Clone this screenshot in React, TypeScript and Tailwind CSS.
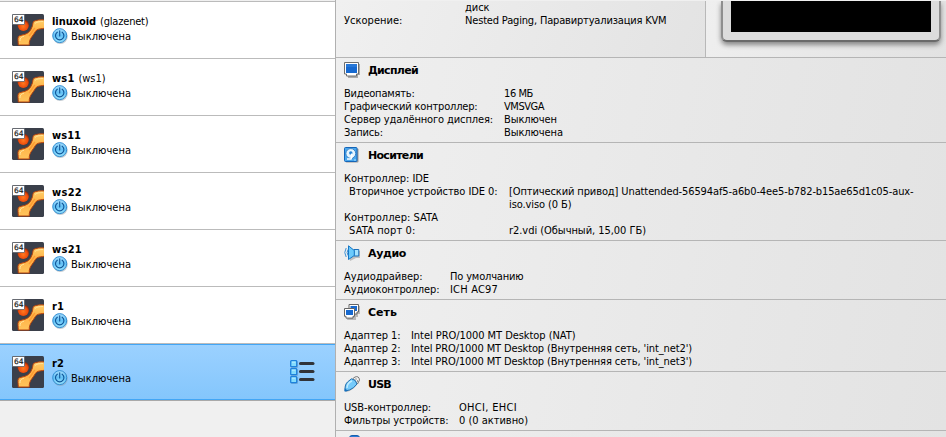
import { useLayoutEffect, useRef, useState, type ReactNode } from "react";

/** Text run whose tracking is adjusted so that it spans the given width. */
function Run({ children, w, bold }: { children: string; w: number; bold?: boolean }) {
  const ref = useRef<HTMLSpanElement>(null);
  const [tracking, setTracking] = useState(0);
  useLayoutEffect(() => {
    const el = ref.current;
    if (el) setTracking((w - el.getBoundingClientRect().width) / children.length);
  }, [w, children]);
  return (
    <span
      ref={ref}
      className={bold ? "inline-block whitespace-pre font-bold" : "inline-block whitespace-pre"}
      style={{ letterSpacing: `${tracking}px` }}
    >
      {children}
    </span>
  );
}

function OsIcon() {
  return (
    <svg width="32" height="32" viewBox="0 0 32 32" className="shrink-0">
      <defs>
        <linearGradient id="osPipe" x1="0" y1="0" x2="0" y2="1">
          <stop offset="0" stopColor="#ffcf6a" />
          <stop offset="0.45" stopColor="#ffb145" />
          <stop offset="1" stopColor="#ffc45c" />
        </linearGradient>
        <radialGradient id="osBall" cx="0.5" cy="0.6" r="0.55">
          <stop offset="0" stopColor="#ff7a20" />
          <stop offset="0.7" stopColor="#ee4c0c" />
          <stop offset="1" stopColor="#8c2a0c" />
        </radialGradient>
        <clipPath id="osClip"><rect width="32" height="32" rx="1.5" /></clipPath>
      </defs>
      <g clipPath="url(#osClip)">
        <rect width="32" height="32" fill="#3a3f4a" />
        <circle cx="11.3" cy="11.3" r="5.700" fill="url(#osBall)" />
        <path
          d="M33 6C29 5.500 24 6 21.500 7.500C20.500 9.500 21 11 20 13C18.500 17 16.500 19 13 20.300C10 21.300 7.500 21.300 6.300 22.800C5.500 25 6.300 28 6.300 31H17.300C17 27.500 18 25 20 22.500C22 20 22.800 18 24.500 16.200C27 14.500 29 15 33 14.200Z"
          fill="url(#osPipe)" stroke="#b8420c" strokeWidth="1"
        />
        <path d="M31 7.500C27 7.500 24.500 8 23 9.500M12 22.200C9 23 8 24 8 27" fill="none" stroke="#ffe39a" strokeWidth="1" />
        <path d="M17 22C20 19.500 20.500 16 23 14" fill="none" stroke="#ff9a30" strokeWidth="1.5" />
      </g>
      <rect x="0.5" y="0.5" width="12" height="10" rx="0.5" fill="#fff" stroke="#50545c" strokeWidth="0.7" />
      <text x="2" y="8.3" fontSize="7.5" fontFamily="DejaVu Sans, sans-serif" fill="#222" stroke="#222" strokeWidth="0.2" textLength="9.500">64</text>
    </svg>
  );
}

function PowerIcon() {
  return (
    <svg width="16" height="16" viewBox="0 0 16 16" className="shrink-0">
      <defs>
        <linearGradient id="pw" x1="0" y1="0" x2="0" y2="1">
          <stop offset="0" stopColor="#a5dcfc" />
          <stop offset="0.5" stopColor="#62c0f5" />
          <stop offset="1" stopColor="#9ce6ff" />
        </linearGradient>
      </defs>
      <circle cx="8.300" cy="8.400" r="7.500" fill="#8a9aa5" opacity="0.5" />
      <circle cx="7.700" cy="7.600" r="7" fill="url(#pw)" stroke="#2687d0" strokeWidth="0.9" />
      <path d="M5.300 4.200A4.200 4.200 0 1 0 10.100 4.200M7.700 2.800V8" fill="none" stroke="#0f5496" strokeWidth="1.1" strokeLinecap="round" />
    </svg>
  );
}

function ListIcon() {
  return (
    <svg width="26" height="24" viewBox="0 0 26 24">
      {[0, 8, 16].map((y) => (
        <g key={y}>
          <rect x="1" y={y + 1} width="7" height="7" rx="1" fill="#4a7da8" opacity="0.4" />
          <rect x="0.700" y={y + 0.7} width="6" height="6" rx="0.8" fill="#84dcfd" stroke="#1f82dc" strokeWidth="1.300" />
          <path d={`M2 ${y + 2.2}h3.400`} stroke="#b8edff" />
          <path d={`M10.500 ${y + 3.5}h12.500`} stroke="#303338" strokeWidth="3" strokeLinecap="round" />
        </g>
      ))}
    </svg>
  );
}

type Vm = { name: string; w: number; snap?: string; snapW?: number; on?: boolean };
const vms: Vm[] = [
  { name: "linuxoid", w: 44, snap: "(glazenet)", snapW: 48.5 },
  { name: "ws1", w: 22.5, snap: "(ws1)", snapW: 27 },
  { name: "ws11", w: 29 },
  { name: "ws22", w: 30 },
  { name: "ws21", w: 30 },
  { name: "r1", w: 12 },
  { name: "r2", w: 12, on: true },
];

function VmRow({ vm }: { vm: Vm }) {
  return (
    <div
      className={
        vm.on
          ? "flex h-[57px] border-b border-[#a9a9a9] bg-white"
          : "flex h-[57px] border-b border-[#bbbbbb] bg-white"
      }
    >
      <div
        className={
          vm.on
            ? "flex w-full border-y border-[#43a6f5] bg-linear-to-b from-[#9bd1ff] to-[#84c6fc] pt-[11px] pl-3"
            : "flex w-full pt-3 pl-3"
        }
      >
        <OsIcon />
        <div className="ml-2 flex-1">
          <div className="flex h-[14px] items-center gap-[4px] pt-px leading-[14px]">
            <Run w={vm.w} bold>{vm.name}</Run>
            {vm.snap && <Run w={vm.snapW ?? 0}>{vm.snap}</Run>}
          </div>
          <div className="flex h-4 items-center gap-[3px]">
            <PowerIcon />
            <Run w={60}>Выключена</Run>
          </div>
        </div>
        {vm.on && <div className="mt-[4px] mr-[19px]"><ListIcon /></div>}
      </div>
    </div>
  );
}

const DisplayIcon = () => (
  <svg width="17" height="17" viewBox="0 0 17 17">
    <path d="M2 2h14v11h-2v3H4v-2H2z" fill="#aaa" />
    <path d="M.5.5h14v11.500h-2v2h-10v-2h-2z" fill="#fff" stroke="#6e6e6e" />
    <rect x="2" y="2" width="11" height="9" fill="#1769cf" />
    <path d="M2 2h11v3H2z" fill="#2878d8" />
  </svg>
);
const DiskIcon = () => (
  <svg width="16" height="16" viewBox="0 0 16 16">
    <rect x="1.500" y="1.500" width="13" height="14" rx="1" fill="#999" />
    <rect x="0.500" y="0.500" width="12.500" height="14" rx="1" fill="#4aa7ed" stroke="#1465b8" />
    <circle cx="6.800" cy="6.500" r="4.900" fill="#e4f5ff" stroke="#1465b8" strokeWidth="0.700" />
    <circle cx="6.800" cy="6" r="1.700" fill="#2383d8" />
    <path d="M7 7c2 1 1 3 0 5H3" fill="none" stroke="#fff" strokeWidth="1.500" />
    <path d="M10 13h2" stroke="#a7e2ff" />
  </svg>
);
const AudioIcon = () => (
  <svg width="17" height="16" viewBox="0 0 17 16">
    <path d="M5 2L11 6h5v7h-4L6 16z" fill="#aaa" opacity=".7" />
    <path d="M10 4.500h4.800v6.500H10z" fill="#a5e3ff" stroke="#1b6eb9" />
    <path d="M4.500.8L10.300 5.500v5L4.500 14.500z" fill="#6bcafc" stroke="#1777c5" />
    <path d="M2.200 3Q-.7 7.500 2.200 12M4 4.500Q2.300 7.500 4 10.500" fill="none" stroke="#3d91d5" strokeWidth="1" />
  </svg>
);
const NetIcon = () => (
  <svg width="17" height="16" viewBox="0 0 17 16">
    <path d="M6 2h10v8h-2v3h-2v3H3z" fill="#aaa" opacity=".8" />
    <path d="M5 .5h9.500v7.500h-1.500v2H5z" fill="#fff" stroke="#656565" />
    <rect x="6.500" y="2" width="6.500" height="5" fill="#1769cf" />
    <path d="M.5 4.500H10.500v7.800H9v1.800H2v-1.800H.5z" fill="#fff" stroke="#656565" />
    <rect x="2" y="6" width="7" height="5" fill="#1769cf" />
  </svg>
);
const UsbIcon = () => (
  <svg width="17" height="17" viewBox="0 0 17 17">
    <path d="M9 2.500l2-1.500q4-1.500 4.500 3l-2 4z" fill="#f4f4f4" stroke="#777" />
    <path d="M11.500 3h1M13 5h1" stroke="#444" strokeWidth="1.200" />
    <path d="M2 16c0-4 0-7 3-9.500L8.500 3q4 .5 5 5L10 12q-3 3-8 4z" fill="#999" opacity=".6" />
    <path d="M1 15C1 11 1 8.500 3.500 6L7.500 2.800Q12 3.500 13 8L9.500 11.700Q6 14.500 1 15z" fill="#76cafa" stroke="#226fae" />
    <path d="M3 12c.2-3 2-6 5-7" fill="none" stroke="#c1edff" strokeWidth="1.400" />
    <path d="M.8 12L4 15l-3.500.5z" fill="#1671c0" />
  </svg>
);

type Cell = [string, number];
type Row = { label?: Cell; value?: Cell; indent?: boolean };

function Section({ icon, title, col, rows }: { icon: ReactNode; title: Cell; col: string; rows: Row[] }) {
  return (
    <section className="shrink-0 border-t border-[#b5b5b5] bg-linear-[100deg,#efefef_0%,#ececec_25%,#e7e7e7_65%,#e3e3e3_100%] pb-[3px] pl-2">
      <div className="flex h-[29px] pt-1">
        <div className="w-6">{icon}</div>
        <div className="mt-px h-[14px] font-['DejaVu_Sans',sans-serif] leading-[15px]"><Run w={title[1]} bold>{title[0]}</Run></div>
      </div>
      {rows.map((r, i) => (
        <div key={i} className="flex h-[13px]">
          <div className={`${col} shrink-0 ${r.indent ? "pl-[5px]" : ""}`}>
            {r.label && <Run w={r.label[1]}>{r.label[0]}</Run>}
          </div>
          {r.value && <Run w={r.value[1]}>{r.value[0]}</Run>}
        </div>
      ))}
    </section>
  );
}

export default function App() {
  return (
    <div className="flex h-[437px] w-[946px] overflow-hidden bg-[#f0f0f0] font-['DejaVu_Sans_Condensed','DejaVu_Sans',sans-serif] text-[11px] leading-[13px] text-black">
      <aside className="w-[335px] shrink-0">
        <div className="h-[2px] border-b border-[#bbbbbb]" />
        {vms.map((vm) => <VmRow key={vm.name} vm={vm} />)}
      </aside>
      <main className="flex min-w-0 flex-1 flex-col overflow-hidden border-l border-[#b0b0b0]">
        <div className="flex h-[57px] shrink-0 border-t border-[#f0f0f0]">
          <div className="w-[369px] bg-linear-[110deg,#f0f0f0,#e3e3e3] pl-2">
            <div className="h-[13px] pl-[121px]"><Run w={24.5}>диск</Run></div>
            <div className="flex h-[13px]">
              <div className="w-[121px]"><Run w={58.5}>Ускорение:</Run></div>
              <Run w={201.5}>Nested Paging, Паравиртуализация KVM</Run>
            </div>
          </div>
          <div className="flex-1 overflow-hidden border-l border-[#b8b8b8] bg-linear-[110deg,#efefef,#e2e2e2] pl-[15px]">
            <div className="h-[41px] w-[220px] rounded-b-[6px] border-x-2 border-b-2 border-x-[#8e8e8e] border-b-[#6a6a6a] bg-[#dcdcdc] px-2 shadow-[0_3px_5px_#888]">
              <div className="h-[31px] w-[200px] bg-black" />
            </div>
          </div>
        </div>
        <Section icon={<DisplayIcon />} title={["Дисплей", 50]} col="w-[160px]" rows={[
          { label: ["Видеопамять:", 70.5], value: ["16 МБ", 29] },
          { label: ["Графический контроллер:", 133.5], value: ["VMSVGA", 40] },
          { label: ["Сервер удалённого дисплея:", 149], value: ["Выключен", 53] },
          { label: ["Запись:", 39], value: ["Выключена", 59] },
        ]} />
        <Section icon={<DiskIcon />} title={["Носители", 55]} col="w-[165px]" rows={[
          { label: ["Контроллер: IDE", 85] },
          { label: ["Вторичное устройство IDE 0:", 148.5], indent: true, value: ["[Оптический привод] Unattended-56594af5-a6b0-4ee5-b782-b15ae65d1c05-aux-", 404.5] },
          { value: ["iso.viso (0 Б)", 62.5] },
          { label: ["Контроллер: SATA", 94] },
          { label: ["SATA порт 0:", 66.5], indent: true, value: ["r2.vdi (Обычный, 15,00 ГБ)", 137] },
        ]} />
        <Section icon={<AudioIcon />} title={["Аудио", 38]} col="w-[106px]" rows={[
          { label: ["Аудиодрайвер:", 78.5], value: ["По умолчанию", 73.5] },
          { label: ["Аудиоконтроллер:", 95.5], value: ["ICH AC97", 48] },
        ]} />
        <Section icon={<NetIcon />} title={["Сеть", 29]} col="w-[67px]" rows={[
          { label: ["Адаптер 1:", 56.5], value: ["Intel PRO/1000 MT Desktop (NAT)", 164.5] },
          { label: ["Адаптер 2:", 56.5], value: ["Intel PRO/1000 MT Desktop (Внутренняя сеть, 'int_net2')", 281] },
          { label: ["Адаптер 3:", 56.5], value: ["Intel PRO/1000 MT Desktop (Внутренняя сеть, 'int_net3')", 281] },
        ]} />
        <Section icon={<UsbIcon />} title={["USB", 23]} col="w-[115px]" rows={[
          { label: ["USB-контроллер:", 87], value: ["OHCI, EHCI", 58] },
          { label: ["Фильтры устройств:", 104.5], value: ["0 (0 активно)", 69] },
        ]} />
        <div className="flex-1 border-t border-[#b5b5b5] bg-linear-[100deg,#efefef,#e3e3e3] pt-1 pl-[13px]">
          <div className="h-2 w-[11px] rounded-t-[3px] border border-[#175eae] bg-[#2d7cd6]" />
        </div>
      </main>
    </div>
  );
}
